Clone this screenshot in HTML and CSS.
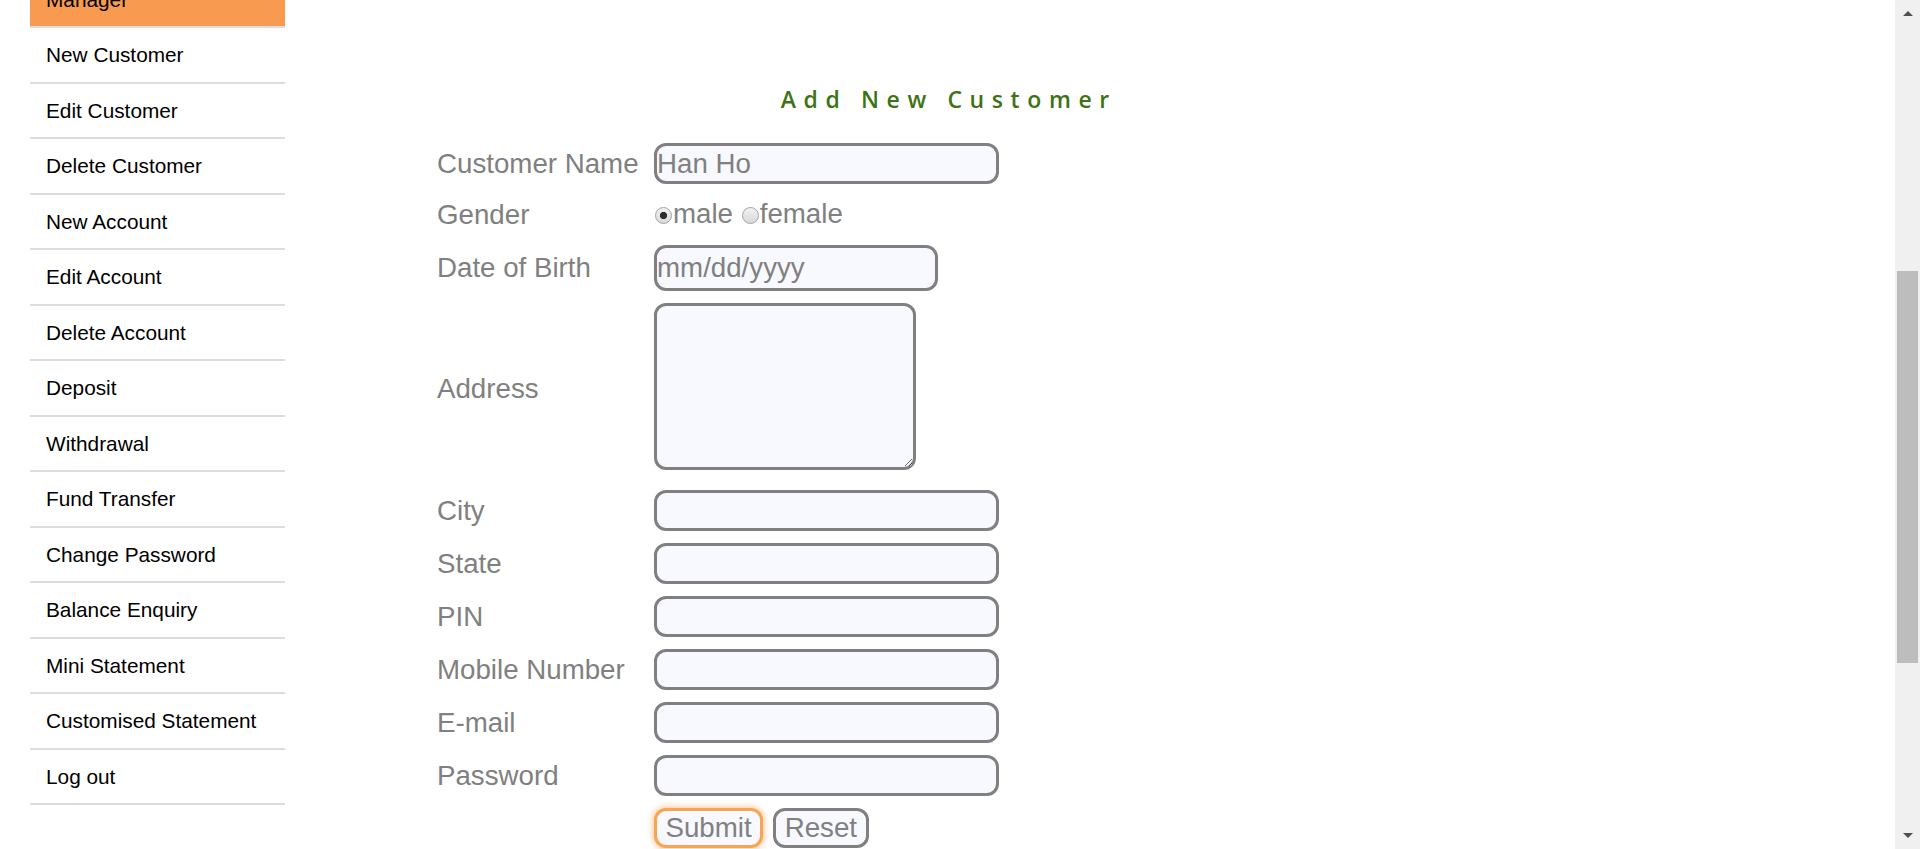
FILE: index.html
```html
<!DOCTYPE html>
<html lang="en">
<head>
<meta charset="utf-8">
<title>Guru99 Bank - Add New Customer</title>
<link rel="stylesheet" href="styles.css">
</head>
<body>
<div class="window">
  <div class="viewport">
    <nav class="sidebar">
      <ul class="menu">
        <li class="menu-item menu-item--active">Manager</li>
        <li class="menu-item">New Customer</li>
        <li class="menu-item">Edit Customer</li>
        <li class="menu-item">Delete Customer</li>
        <li class="menu-item">New Account</li>
        <li class="menu-item">Edit Account</li>
        <li class="menu-item">Delete Account</li>
        <li class="menu-item">Deposit</li>
        <li class="menu-item">Withdrawal</li>
        <li class="menu-item">Fund Transfer</li>
        <li class="menu-item">Change Password</li>
        <li class="menu-item">Balance Enquiry</li>
        <li class="menu-item">Mini Statement</li>
        <li class="menu-item">Customised Statement</li>
        <li class="menu-item">Log out</li>
      </ul>
    </nav>
    <main class="main">
      <form class="customer-form">
        <h2 class="form-title">Add New Customer</h2>
        <div class="form-row">
          <label class="form-label">Customer Name</label>
          <input class="field" type="text" value="Han Ho">
        </div>
        <div class="form-row form-row--gender">
          <span class="form-label">Gender</span>
          <div class="radios">
            <label class="radio"><input class="radio-input" type="radio" name="gender" checked>male</label>
            <label class="radio"><input class="radio-input" type="radio" name="gender">female</label>
          </div>
        </div>
        <div class="form-row">
          <label class="form-label">Date of Birth</label>
          <input class="field field--date" type="text" placeholder="mm/dd/yyyy">
        </div>
        <div class="form-row form-row--address">
          <label class="form-label form-label--address">Address</label>
          <textarea class="field field--area"></textarea>
        </div>
        <div class="form-row">
          <label class="form-label">City</label>
          <input class="field" type="text">
        </div>
        <div class="form-row">
          <label class="form-label">State</label>
          <input class="field" type="text">
        </div>
        <div class="form-row">
          <label class="form-label">PIN</label>
          <input class="field" type="text">
        </div>
        <div class="form-row">
          <label class="form-label">Mobile Number</label>
          <input class="field" type="text">
        </div>
        <div class="form-row">
          <label class="form-label">E-mail</label>
          <input class="field" type="text">
        </div>
        <div class="form-row">
          <label class="form-label">Password</label>
          <input class="field" type="password">
        </div>
        <div class="form-row form-row--buttons">
          <button class="btn btn--focused" type="button">Submit</button>
          <button class="btn" type="button">Reset</button>
        </div>
      </form>
    </main>
  </div>
  <div class="scrollbar">
    <div class="sb-btn">
      <svg width="10" height="5" viewBox="0 0 10 5"><polygon points="0,5 5,0 10,5" fill="#505050"/></svg>
    </div>
    <div class="sb-track"><div class="sb-thumb"></div></div>
    <div class="sb-btn">
      <svg width="10" height="5" viewBox="0 0 10 5"><polygon points="0,0 10,0 5,5" fill="#505050"/></svg>
    </div>
  </div>
</div>
</body>
</html>
```

FILE: styles.css
```css
html, body {
  margin: 0;
  padding: 0;
  background: #ffffff;
  overflow: hidden;
}

body {
  font-family: "Liberation Sans", Arial, sans-serif;
}

.window {
  display: flex;
  width: 1920px;
  height: 849px;
  overflow: hidden;
}

.viewport {
  flex: 1;
  display: flex;
  align-items: flex-start;
  overflow: hidden;
}

/* Sidebar */
.sidebar {
  flex: none;
  width: 255px;
  margin: -27.5px 0 0 30px;
}

.menu {
  list-style: none;
  margin: 0;
  padding: 0;
}

.menu-item {
  height: 53.5px;
  line-height: 53.5px;
  padding-left: 16px;
  border-bottom: 2px solid #dddddd;
  font-size: 20.8px;
  color: #000000;
  white-space: nowrap;
}

.menu-item--active {
  background: #f89b50;
}

/* Main form */
.main {
  flex: 1;
  padding: 84px 0 0 152px;
}

.customer-form {
  display: flex;
  flex-direction: column;
  gap: 12px;
  width: 1016px;
}

.form-title {
  margin: 0 0 17px;
  padding-left: 7.6px;
  font-family: "Open Sans", "Noto Sans", sans-serif;
  font-weight: 600;
  font-size: 23px;
  line-height: 30px;
  letter-spacing: 7.6px;
  text-align: center;
  color: #3e7315;
}

.form-row {
  display: flex;
  align-items: center;
}

.form-row--gender {
  height: 37px;
}

.form-row--address {
  margin-bottom: 8px;
}

.form-row--buttons {
  padding-left: 217px;
  gap: 10px;
}

.form-label {
  flex: none;
  width: 217px;
  font-size: 27.7px;
  color: #808080;
  white-space: nowrap;
}

.form-label--address {
  padding-top: 4px;
}

.field {
  box-sizing: border-box;
  width: 345px;
  height: 41px;
  margin: 0;
  padding: 0;
  border: 3px solid #808080;
  border-radius: 12px;
  background: #f8f8ff;
  font-family: "Liberation Sans", Arial, sans-serif;
  font-size: 27.7px;
  color: #808080;
  outline: none;
}

.field::placeholder {
  color: #808080;
  opacity: 1;
}

.field--date {
  width: 284px;
  height: 46px;
}

.field--area {
  display: block;
  width: 262px;
  height: 167px;
  resize: both;
}

.radios {
  font-size: 27.7px;
  color: #808080;
  white-space: nowrap;
}

.radio {
  display: inline-flex;
  align-items: center;
}

.radio-input {
  appearance: none;
  -webkit-appearance: none;
  box-sizing: border-box;
  width: 17px;
  height: 17px;
  margin: 2px 1px 0 1px;
  border: 1px solid #a3a3a3;
  border-radius: 50%;
  background: linear-gradient(#f2f2f2, #d9d9d9);
}

.radio-input:checked {
  background:
    radial-gradient(circle, #2e2e2e 0, #2e2e2e 3.2px, transparent 4px),
    linear-gradient(#f2f2f2, #d9d9d9);
}

.btn {
  box-sizing: border-box;
  height: 40px;
  margin: 0;
  padding: 0 8.5px;
  border: 3px solid #808080;
  border-radius: 12px;
  background: #f8f8ff;
  font-family: "Liberation Sans", Arial, sans-serif;
  font-size: 27.7px;
  line-height: 1;
  color: #808080;
}

.btn--focused {
  border-color: #f7a552;
  box-shadow: 0 0 6px 1px rgba(249, 150, 60, 0.55);
}

/* Fake browser scrollbar */
.scrollbar {
  flex: none;
  width: 25px;
  height: 849px;
  display: flex;
  flex-direction: column;
  background: #f0f0f0;
}

.sb-btn {
  flex: none;
  height: 27px;
  display: flex;
  align-items: center;
  justify-content: center;
}

.sb-track {
  flex: 1;
  padding: 244px 2px 0;
}

.sb-thumb {
  height: 392px;
  background: #bdbdbd;
}
```
